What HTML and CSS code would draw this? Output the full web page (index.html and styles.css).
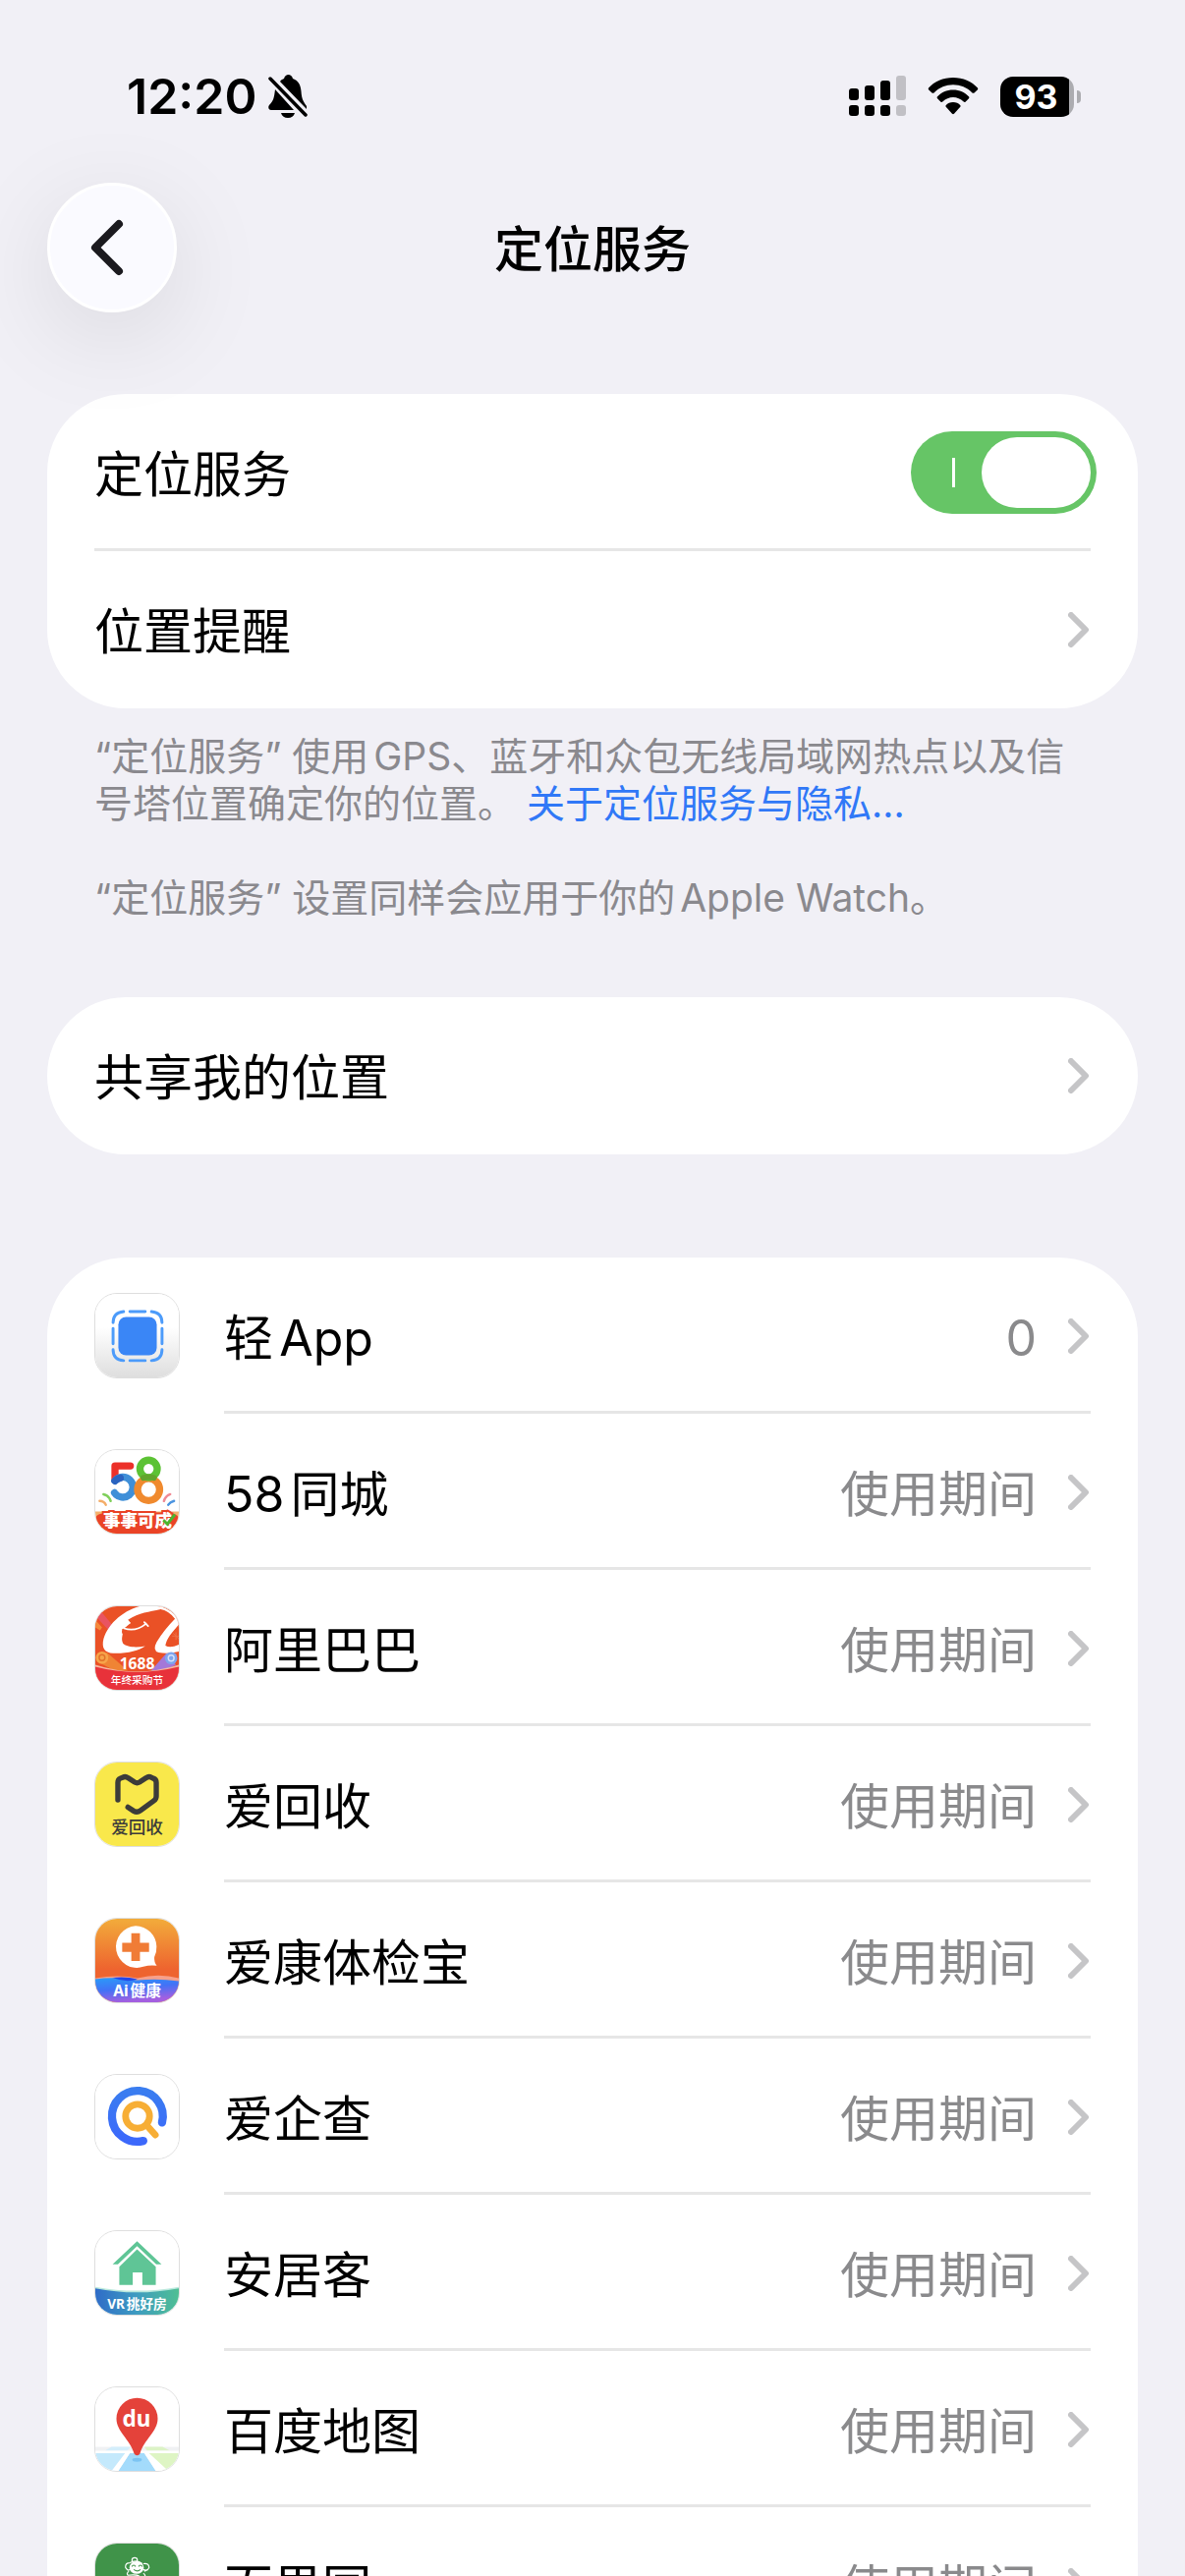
FILE: index.html
```html
<!DOCTYPE html>
<html lang="zh-CN">

<head>
    <meta charset="UTF-8">
    <meta name="viewport" content="width=device-width, initial-scale=1.0">
    <title>定位服务</title>
    <link rel="stylesheet" href="styles.css">
</head>

<body>

    <!-- 状态栏 -->
    <div class="status-bar">
        <div class="status-left">
            <span class="time">12:20</span>
            <svg class="bell" viewBox="0 0 40 44" width="40" height="44">
                <path d="M12 7C13 5 15 4.500 16 4C17 1 18.500 0 20.500 0C22.500 0 24 1 25 4C31 6 33 11 33.500 17C34 25 36 28 39 32V35L12 7Z" />
                <path d="M7 15L26 36H3C-.5 36 0 32 1 31C5 27 6 24 7 15Z" />
                <path d="M13 39H27C26 42.500 23.500 44 20 44C16.500 44 14 42.500 13 39Z" />
                <path d="M2 4L38 41" stroke="#000" stroke-width="3.500" stroke-linecap="round" />
            </svg>
        </div>
        <div class="status-right">
            <svg class="signal" viewBox="0 0 58 42" width="58" height="42">
                <rect x="0" y="13" width="10" height="12" rx="3" />
                <rect x="16" y="10" width="10" height="15" rx="3" />
                <rect x="32" y="5" width="10" height="20" rx="3" />
                <rect class="dim" x="48" y="0" width="10" height="25" rx="3" />
                <rect x="0" y="30" width="10" height="11" rx="3" />
                <rect x="16" y="30" width="10" height="11" rx="3" />
                <rect x="32" y="30" width="10" height="11" rx="3" />
                <rect class="dim" x="48" y="30" width="10" height="11" rx="3" />
            </svg>
            <svg class="wifi" viewBox="0 0 52 38" width="52" height="38">
                <path d="M26 0C36 0 45 4 51 10.500Q51.500 11.500 51 12.300L47.500 15.500Q46.500 16.200 45.500 15.500C40 10 33.500 7.300 26 7.300S12 10 6.500 15.500Q5.500 16.200 4.500 15.500L1 12.300Q.5 11.500 1 10.500C7 4 16 0 26 0Z" />
                <path d="M26 12.500C32.500 12.500 38 15 42.200 19.500Q42.700 20.500 42 21.300L38.500 24.700Q37.500 25.300 36.700 24.500C33.500 21.500 30 20 26 20S18.500 21.500 15.300 24.500Q14.500 25.300 13.500 24.700L10 21.300Q9.300 20.500 9.800 19.500C14 15 19.500 12.500 26 12.500Z" />
                <path d="M26 25C29 25 31.500 26 33.400 28.200Q33.900 29 33.300 29.800L27 36.800Q26 37.700 25 36.800L18.700 29.800Q18.100 29 18.600 28.200C20.500 26 23 25 26 25Z" />
            </svg>
            <div class="battery"><span class="battery-level">93</span></div>
        </div>
    </div>

    <!-- 导航栏 -->
    <header class="nav">
        <button class="back" type="button" aria-label="返回">
            <svg viewBox="0 0 34 58" width="34" height="58">
                <path d="M29 5L5 29L29 53" />
            </svg>
        </button>
        <h1>定位服务</h1>
    </header>

    <main>
        <section class="card">
            <div class="row">
                <label class="name" for="location">定位服务</label>
                <input class="switch" type="checkbox" role="switch" id="location" checked>
            </div>
            <a class="row" href="#alerts">
                <span class="name">位置提醒</span>
                <svg class="arrow" viewBox="0 0 22 36"><path d="M3 3L18 18L3 33" /></svg>
            </a>
        </section>

        <div class="note">
            <p>“定位服务” 使用GPS、蓝牙和众包无线局域网热点以及信号塔位置确定你的位置。 <a href="#privacy">关于定位服务与隐私…</a></p>
            <p>“定位服务” 设置同样会应用于你的Apple Watch。</p>
        </div>

        <section class="card">
            <a class="row" href="#share">
                <span class="name">共享我的位置</span>
                <svg class="arrow" viewBox="0 0 22 36"><path d="M3 3L18 18L3 33" /></svg>
            </a>
        </section>

        <!-- 应用列表 -->
        <section class="card apps">
            <a class="app" href="#app-clips">
                <svg class="icon" viewBox="0 0 87 87">
                    <defs>
                        <linearGradient id="clip-bg" x1="0" y1="0" x2="0" y2="1">
                            <stop offset=".4" stop-color="#fff" />
                            <stop offset="1" stop-color="#dedede" />
                        </linearGradient>
                    </defs>
                    <rect width="87" height="87" fill="url(#clip-bg)" />
                    <rect x="24" y="24" width="40" height="40" rx="8" fill="#3a86f6" />
                    <g fill="none" stroke="#4c9bfa" stroke-width="3" stroke-linecap="round">
                        <path d="M36 18.500H52M36 69.500H52M18.500 36V52M69.500 36V52" />
                        <path d="M29.500 18.500Q18.500 19.500 18.500 30M58.500 18.500Q69.500 19.500 69.500 30M29.500 69.500Q18.500 68.500 18.500 58M58.500 69.500Q69.500 68.500 69.500 58" />
                    </g>
                </svg>
                <span class="app-body">
                    <span class="name">轻App</span>
                    <span class="value">0</span>
                    <svg class="arrow" viewBox="0 0 22 36"><path d="M3 3L18 18L3 33" /></svg>
                </span>
            </a>

            <a class="app" href="#58">
                <svg class="icon" viewBox="0 0 87 87">
                    <rect width="87" height="87" fill="#fff" />
                    <g fill="none" stroke-width="7.500" stroke-linecap="round" stroke-linejoin="round">
                        <path d="M36.500 16.500H20.500V31" stroke="#ec3029" />
                        <path d="M20.500 32A10.500 10.500 0 1 1 20 44.500" stroke="#3f8fd8" />
                        <path d="M20.500 32Q23 29.500 26 29" stroke="#2a63c0" />
                        <circle cx="55.500" cy="41" r="11.500" stroke="#f08a2e" />
                        <circle cx="55.500" cy="19.500" r="9" stroke="#5cc234" />
                        <path d="M50 29Q55.500 27 61 29" stroke="#62a52c" stroke-width="6" />
                    </g>
                    <g fill="none" stroke-width="2.500" stroke-linecap="round">
                        <path d="M8.500 46Q14 47 16 53" stroke="#7fcf5a" />
                        <path d="M4.500 53Q9 53 11 57" stroke="#f4ad68" />
                        <path d="M78 46Q73 48 71.500 53" stroke="#f08a94" />
                        <path d="M82 53Q78 54 76 57" stroke="#4b94e0" />
                    </g>
                    <path d="M0 64H87V87H0Z" fill="#f4b16c" />
                    <path d="M0 70Q3 66 8 66H79Q84 66 87 70V87H0Z" fill="#ea4326" />
                    <text x="44" y="80" font-size="18" font-weight="900" fill="#fff" stroke="#ea4326" stroke-width="4" paint-order="stroke" text-anchor="middle">事事可成</text>
                    <path d="M71 73L75 77L83 67" fill="none" stroke="#4cb52e" stroke-width="3" />
                </svg>
                <span class="app-body">
                    <span class="name">58同城</span>
                    <span class="value">使用期间</span>
                    <svg class="arrow" viewBox="0 0 22 36"><path d="M3 3L18 18L3 33" /></svg>
                </span>
            </a>

            <a class="app" href="#1688">
                <svg class="icon" viewBox="0 0 87 87">
                    <rect width="87" height="87" fill="#ea5126" />
                    <path d="M5 4L19 21L14 25L0 10Z" fill="#e8557a" opacity=".7" />
                    <path d="M0 14L7 22L5 25L0 22Z" fill="#f48a3c" />
                    <path d="M46 0C28 5 11 20 8 37C7 46 12 49 22 49C34 49 46 46 52 41.500C44 43 33 43 29 39C27 35 28 32 28.500 29C27 27 28 25 28 23.500C30 24 36 18 37 17.500L34 14C46 6 56 6 68 3L71 0Z" fill="#fff" />
                    <path d="M30 23Q42 27 53 18M51 16.500L55 20.500" fill="none" stroke="#fff" stroke-width="1.800" stroke-linecap="round" />
                    <path d="M68 0Q78 3 87 13V19C80 27 74 34 73 41Q78 44 87 40V47Q76 50 66 48Q59 46 64 37Q72 24 83 13Q76 4 68 3Z" fill="#fff" />
                    <path d="M80 31H88M84 27V35M81 28L87 34" stroke="#ee7148" stroke-width="1" />
                    <path d="M3 58L12 48L34 67H20Z" fill="#ef8434" />
                    <circle cx="7" cy="53.500" r="6.500" fill="#f6a44a" />
                    <circle cx="7" cy="53.500" r="3" fill="none" stroke="#e2712a" stroke-width="1.500" />
                    <path d="M84 61L74 49L58 67H72Z" fill="#a478d8" />
                    <circle cx="79" cy="54" r="6.500" fill="#7ea6ee" />
                    <circle cx="79" cy="54" r="3" fill="none" stroke="#d5e2fb" stroke-width="1.500" />
                    <path d="M0 61Q43 75 87 61V87H0Z" fill="#f6b7a0" />
                    <path d="M0 63Q43 74 87 63V87H0Z" fill="#e8323a" />
                    <text class="narrow" x="43.500" y="65" font-size="16" font-weight="700" fill="#fff" text-anchor="middle">1688</text>
                    <text x="43.500" y="81" font-size="11" font-weight="500" fill="#fff" text-anchor="middle">年终采购节</text>
                </svg>
                <span class="app-body">
                    <span class="name">阿里巴巴</span>
                    <span class="value">使用期间</span>
                    <svg class="arrow" viewBox="0 0 22 36"><path d="M3 3L18 18L3 33" /></svg>
                </span>
            </a>

            <a class="app" href="#aihuishou">
                <svg class="icon" viewBox="0 0 87 87">
                    <rect width="87" height="87" fill="#f9e84b" />
                    <path d="M23.500 39V21Q23.500 17.500 26 16.500L30 15Q32 14.500 34 16L41 20.500Q43.500 22 46 20.500L53 16Q55 14.500 57 15L60.500 16.500Q63.500 17.500 63.500 21V35Q63.500 38 61 39.800L47 50Q43.500 52.500 40 50.500L34 46.500" fill="none" stroke="#3c3c3a" stroke-width="5.500" stroke-linecap="round" />
                    <text x="43.500" y="74" font-size="18" font-weight="500" fill="#3c3c3a" text-anchor="middle">爱回收</text>
                </svg>
                <span class="app-body">
                    <span class="name">爱回收</span>
                    <span class="value">使用期间</span>
                    <svg class="arrow" viewBox="0 0 22 36"><path d="M3 3L18 18L3 33" /></svg>
                </span>
            </a>

            <a class="app" href="#ikang">
                <svg class="icon" viewBox="0 0 87 87">
                    <defs>
                        <linearGradient id="kang-bg" x1="0" y1="0" x2="0" y2="1">
                            <stop offset="0" stop-color="#f2ac3b" />
                            <stop offset=".6" stop-color="#ee642f" />
                        </linearGradient>
                        <linearGradient id="kang-wave" x1="0" y1="0" x2=".3" y2="1">
                            <stop offset="0" stop-color="#2a9bf8" />
                            <stop offset=".5" stop-color="#4272f6" />
                            <stop offset="1" stop-color="#a45fe0" />
                        </linearGradient>
                    </defs>
                    <rect width="87" height="87" fill="url(#kang-bg)" />
                    <path d="M42 7.500A21.800 21.800 0 1 0 50 50Q57 48 64 49Q61 45 61.500 40Q64 35 63.800 29A21.800 21.800 0 0 0 42 7.500Z" fill="#fff" />
                    <path d="M37.500 15H46.500V25H56V34.500H46.500V44H37.500V34.500H28V25H37.500Z" fill="#f07c36" />
                    <path d="M0 62Q24 58 44 62Q66 56 87 62V87H0Z" fill="#f7a08a" />
                    <path d="M0 63Q20 60 44 64Q66 62 87 65V87H0Z" fill="url(#kang-wave)" />
                    <path d="M18 61.500Q32 60 44 63Q32 67 18 61.500Z" fill="#2446e8" />
                    <text class="narrow" x="43.500" y="81" font-size="16" font-weight="700" fill="#fff" text-anchor="middle">Ai健康</text>
                </svg>
                <span class="app-body">
                    <span class="name">爱康体检宝</span>
                    <span class="value">使用期间</span>
                    <svg class="arrow" viewBox="0 0 22 36"><path d="M3 3L18 18L3 33" /></svg>
                </span>
            </a>

            <a class="app" href="#aiqicha">
                <svg class="icon" viewBox="0 0 87 87">
                    <defs>
                        <linearGradient id="cha-ring" x1="0" y1="0" x2="0" y2="1">
                            <stop offset="0" stop-color="#3a7df0" />
                            <stop offset="1" stop-color="#3c68fb" />
                        </linearGradient>
                    </defs>
                    <rect width="87" height="87" fill="#fff" />
                    <path d="M69.500 49.500A26.500 26.500 0 1 0 50 68.700" fill="none" stroke="url(#cha-ring)" stroke-width="8.500" stroke-linecap="round" />
                    <g fill="none" stroke="#f7ae35" stroke-width="7" stroke-linecap="round">
                        <circle cx="44" cy="43" r="12.500" />
                        <path d="M54 53L62.500 62.500" />
                    </g>
                </svg>
                <span class="app-body">
                    <span class="name">爱企查</span>
                    <span class="value">使用期间</span>
                    <svg class="arrow" viewBox="0 0 22 36"><path d="M3 3L18 18L3 33" /></svg>
                </span>
            </a>

            <a class="app" href="#anjuke">
                <svg class="icon" viewBox="0 0 87 87">
                    <defs>
                        <linearGradient id="an-band" x1="0" y1="0" x2="1" y2="0">
                            <stop offset="0" stop-color="#2f6cc8" />
                            <stop offset=".5" stop-color="#3e9cc0" />
                            <stop offset="1" stop-color="#4fbf93" />
                        </linearGradient>
                    </defs>
                    <rect width="87" height="87" fill="#fff" />
                    <path d="M43.500 10.500L69 34.500H63.500L43.500 15.500L23.500 34.500H18Z" fill="#5fc596" />
                    <path d="M43.500 19L63 37V56H49V43H39V56H25V37Z" fill="#5fc596" />
                    <path d="M0 58Q43 66 87 58V87H0Z" fill="#b9e8dc" />
                    <path d="M0 59.500Q43 68 87 59.500V87H0Z" fill="url(#an-band)" />
                    <text class="narrow" x="43.500" y="81" font-size="14" font-weight="700" fill="#fff" text-anchor="middle">VR挑好房</text>
                </svg>
                <span class="app-body">
                    <span class="name">安居客</span>
                    <span class="value">使用期间</span>
                    <svg class="arrow" viewBox="0 0 22 36"><path d="M3 3L18 18L3 33" /></svg>
                </span>
            </a>

            <a class="app" href="#baidu-map">
                <svg class="icon" viewBox="0 0 87 87">
                    <rect width="87" height="87" fill="#fff" />
                    <rect y="62" width="87" height="25" fill="#f0f1f3" />
                    <path d="M17 62H37L33 66H10Z" fill="#d4eefb" />
                    <path d="M51 62H70L78 66H54Z" fill="#dcf3c6" />
                    <path d="M0 66H87V68.500H0Z" fill="#fff" />
                    <path d="M0 68.500H33L20 87H0Z" fill="#c4e9fc" />
                    <path d="M54 68.500H87V87H72Z" fill="#def5c4" />
                    <path d="M36 68.500H51L63 87H24Z" fill="#a3dbfb" />
                    <path d="M31 68.500H36L24 87H17ZM51 68.500H56L76 87H63Z" fill="#fff" />
                    <ellipse cx="43.500" cy="75.500" rx="5" ry="2" fill="#7cc4f2" />
                    <path d="M43.500 11A21.500 21.500 0 0 0 22 32.500C22 46 36 54 40.500 69Q43.500 73 46.500 69C51 54 65 46 65 32.500A21.500 21.500 0 0 0 43.500 11Z" fill="#e4423a" />
                    <text class="narrow" x="43" y="41" font-size="23" font-weight="700" fill="#fff" text-anchor="middle">du</text>
                </svg>
                <span class="app-body">
                    <span class="name">百度地图</span>
                    <span class="value">使用期间</span>
                    <svg class="arrow" viewBox="0 0 22 36"><path d="M3 3L18 18L3 33" /></svg>
                </span>
            </a>

            <a class="app" href="#pagoda">
                <svg class="icon" viewBox="0 0 87 87">
                    <rect width="87" height="87" fill="#409349" />
                    <g fill="none" stroke="#fff" stroke-width="1.200">
                        <circle cx="41" cy="17.500" r="2.800" />
                        <path d="M36 20Q43 16 49 21M36 20Q31 20 31.500 25Q34 29 36 27M50 21Q56 20 56 25Q54 29 50 27M51 29L55 27M35 29Q32 31 34 33Q43 32 46 34M50 31Q53 33 51 35" />
                    </g>
                    <ellipse cx="43" cy="25" rx="7.500" ry="6.500" fill="#fff" />
                    <path d="M38 24Q40 21 42 24M45 24Q47 21 49 24M40 27Q44 30 47 27" fill="none" stroke="#409349" stroke-width="1.200" />
                </svg>
                <span class="app-body">
                    <span class="name">百果园</span>
                    <span class="value">使用期间</span>
                    <svg class="arrow" viewBox="0 0 22 36"><path d="M3 3L18 18L3 33" /></svg>
                </span>
            </a>
        </section>
    </main>

</body>

</html>
```
FILE: styles.css
```css
* {
    box-sizing: border-box;
}

body {
    margin: 0;
    height: 100vh;
    display: flex;
    flex-direction: column;
    overflow: hidden;
    background: #f1f0f6;
    color: #000;
    font-family: Inter, "Noto Sans CJK SC", sans-serif;
    font-size: 50px;
    line-height: 60px;
    text-autospace: normal;
}

a {
    color: inherit;
    text-decoration: none;
}

/* 状态栏 */
.status-bar {
    display: flex;
    justify-content: space-between;
    align-items: center;
    flex: none;
    height: 128px;
    padding: 68px 113px 0 129px;
}

.status-left,
.status-right {
    display: flex;
    align-items: center;
}

.status-left {
    gap: 12px;
}

.status-right {
    gap: 22px;
}

.time {
    font-weight: 600;
}

.dim {
    fill: #c1c0c5;
}

.battery {
    position: relative;
    width: 75px;
    height: 41px;
    padding-right: 2px;
    border-radius: 13px;
    background: linear-gradient(to right, #000 70px, #acacb0 70px);
    color: #fff;
    font-size: 34px;
    font-weight: 700;
    line-height: 41px;
    text-align: center;
}

.battery::after {
    content: "";
    position: absolute;
    right: -7px;
    top: 14px;
    width: 4px;
    height: 13px;
    border-radius: 0 4px 4px 0;
    background: #acacb0;
}

/* 导航栏 */
.nav {
    position: relative;
    z-index: 1;
    display: grid;
    grid-template-columns: 132px 1fr 132px;
    align-items: center;
    flex: none;
    margin: 58px 48px 83px;
}

.nav h1 {
    margin: 0;
    padding-top: 4px;
    font-size: 50px;
    font-weight: 500;
    text-align: center;
}

.back {
    display: flex;
    align-items: center;
    justify-content: center;
    width: 132px;
    height: 132px;
    padding: 0 10px 0 0;
    border: 3px solid #fff;
    border-radius: 50%;
    background: #fafaff;
    box-shadow: 0 24px 100px rgba(0, 0, 0, 0.1);
}

.back path {
    fill: none;
    stroke: #1b1a1f;
    stroke-width: 8;
    stroke-linecap: round;
    stroke-linejoin: round;
}

main {
    flex: 1;
    min-height: 0;
    padding: 0 48px;
    overflow: hidden;
}

.card {
    border-radius: 80px;
    background: #fff;
    overflow: hidden;
}

.row {
    display: flex;
    align-items: center;
    justify-content: space-between;
    height: 160px;
    margin: 0 48px;
}

.row + .row {
    box-shadow: 0 -3px #e6e6e6;
}

.name,
.value {
    padding-top: 4px;
}

.arrow {
    flex: none;
    width: 22px;
    height: 36px;
    margin-right: 1px;
    fill: none;
    stroke: #c5c5c7;
    stroke-width: 6;
    stroke-linecap: round;
    stroke-linejoin: round;
}

/* 开关 */
.switch {
    appearance: none;
    position: relative;
    width: 189px;
    height: 84px;
    margin: 0 -6px 0 0;
    border-radius: 42px;
    background: #66c566;
}

.switch::before {
    content: "";
    position: absolute;
    left: 42px;
    top: 27px;
    width: 3px;
    height: 30px;
    background: #fff;
}

.switch::after {
    content: "";
    position: absolute;
    right: 6px;
    top: 6px;
    width: 111px;
    height: 72px;
    border-radius: 36px;
    background: #fff;
}

/* 说明文字 */
.note {
    padding: 25px 36px 77px 48px;
    color: #8a898e;
    font-size: 39px;
    line-height: 48px;
}

.note p {
    margin: 0 0 48px;
}

.note p:last-child {
    margin: 0;
}

.note a {
    color: #3078f7;
}

/* 应用列表 */
.apps {
    margin-top: 105px;
}

.app {
    display: flex;
    align-items: center;
    gap: 45px;
    padding: 0 48px;
}

.icon {
    flex: none;
    width: 87px;
    height: 87px;
    border: 1px solid #dedede;
    border-radius: 23px;
}

.icon .narrow {
    font-family: "Noto Sans", "Noto Sans CJK SC", sans-serif;
}

.app-body {
    flex: 1;
    display: flex;
    align-items: center;
    height: 159px;
    box-shadow: inset 0 -3px #e6e6e6;
}

.value {
    margin-left: auto;
    margin-right: 32px;
    color: #8a8a8c;
}
```
